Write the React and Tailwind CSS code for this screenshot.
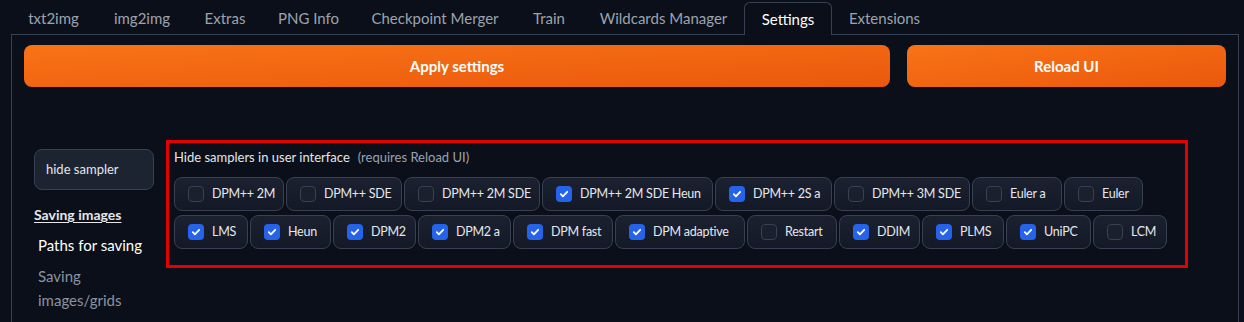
import React, { useState } from 'react';

const tabs = [
  { label: 'txt2img', w: 'w-[85px]' },
  { label: 'img2img', w: 'w-[92px]' },
  { label: 'Extras', w: 'w-[74px]' },
  { label: 'PNG Info', w: 'w-[93px]' },
  { label: 'Checkpoint Merger', w: 'w-[160px]' },
  { label: 'Train', w: 'w-[68px]' },
  { label: 'Wildcards Manager', w: 'w-[161px]' },
  { label: 'Settings', w: 'w-[88px]' },
  { label: 'Extensions', w: 'w-[105px]' },
];

const samplers = [
  { name: 'DPM++ 2M', w: 'w-[110px]', on: false },
  { name: 'DPM++ SDE', w: 'w-[116px]', on: false },
  { name: 'DPM++ 2M SDE', w: 'w-[136px]', on: false },
  { name: 'DPM++ 2M SDE Heun', w: 'w-[171px]', on: true },
  { name: 'DPM++ 2S a', w: 'w-[117px]', on: true },
  { name: 'DPM++ 3M SDE', w: 'w-[136px]', on: false },
  { name: 'Euler a', w: 'w-[90px]', on: false },
  { name: 'Euler', w: 'w-[79px]', on: false },
  { name: 'LMS', w: 'w-[74px]', on: true },
  { name: 'Heun', w: 'w-[81px]', on: true },
  { name: 'DPM2', w: 'w-[83px]', on: true },
  { name: 'DPM2 a', w: 'w-[93px]', on: true },
  { name: 'DPM fast', w: 'w-[100px]', on: true },
  { name: 'DPM adaptive', w: 'w-[130px]', on: true },
  { name: 'Restart', w: 'w-[90px]', on: false },
  { name: 'DDIM', w: 'w-[81px]', on: true },
  { name: 'PLMS', w: 'w-[82px]', on: true },
  { name: 'UniPC', w: 'w-[85px]', on: true },
  { name: 'LCM', w: 'w-[74px]', on: false },
];

const SamplerChip = ({ name, w, checked, onToggle }) => (
  <label
    className={`${w} h-[34px] flex items-center pl-[13px] gap-[8px] rounded-lg border border-[#374151] bg-linear-to-b from-[#1b2130] to-[#131926] cursor-pointer overflow-hidden`}
  >
    <span
      onClick={onToggle}
      className={`w-4 h-4 shrink-0 rounded flex items-center justify-center ${
        checked ? 'bg-[#2563eb]' : 'bg-[#1a202d] border border-[#374151]'
      }`}
    >
      {checked && (
        <svg viewBox="0 0 16 16" className="w-4 h-4" fill="none">
          <path d="M4.8 8.2l2.1 2.1 4.3-4.5" stroke="white" strokeWidth="1.8" strokeLinecap="round" strokeLinejoin="round" />
        </svg>
      )}
    </span>
    <span className="text-[12.5px] tracking-[-0.25px] text-[#e5e7eb] whitespace-nowrap">{name}</span>
  </label>
);

const App = () => {
  const [checked, setChecked] = useState(samplers.map((s) => s.on));

  const toggle = (i) => setChecked((prev) => prev.map((v, j) => (j === i ? !v : v)));

  return (
    <div className="min-h-[322px] bg-[#0b0f19] pt-[2px] font-['Lato',sans-serif] overflow-hidden">
      {/* Tabs */}
      <div className="relative z-10 flex h-[33px] pl-[11px]">
        {tabs.map((t) =>
          t.label === 'Settings' ? (
            <button
              key={t.label}
              className={`${t.w} h-[33px] text-[15px] text-white bg-[#0b0f19] border border-b-0 border-[#374151] rounded-t-md`}
            >
              {t.label}
            </button>
          ) : (
            <button key={t.label} className={`${t.w} h-[33px] text-[15px] text-[#9ca3af]`}>
              {t.label}
            </button>
          )
        )}
      </div>

      {/* Panel */}
      <div className="ml-[11px] mr-[5px] -mt-px border-l border-t border-r border-[#374151] px-3 pt-[10px] h-[300px]">
        <div className="flex gap-[17px]">
          <button className="flex-1 h-[42px] rounded-lg bg-linear-to-br from-[#f97316] to-[#ea580c] text-white text-[15px] font-bold">
            Apply settings
          </button>
          <button className="w-[319px] h-[42px] rounded-lg bg-linear-to-br from-[#f97316] to-[#ea580c] text-white text-[15px] font-bold">
            Reload UI
          </button>
        </div>

        <div className="flex mt-[53px]">
          {/* Sidebar */}
          <div className="w-[130px] pl-[10px] shrink-0">
            <div className="mt-[9px] h-[41px] rounded-lg border border-[#374151] bg-[#1c2331] flex items-center pl-[11px] text-[13px] text-[#e5e7eb]">
              hide sampler
            </div>
            <div className="mt-[15px] text-[14px] leading-5 font-bold text-[#e5e7eb] underline underline-offset-2">
              Saving images
            </div>
            <div className="mt-2 pl-1 text-[15px] leading-6 text-white">Paths for saving</div>
            <div className="mt-[7px] pl-1 text-[15px] leading-6 text-[#8b93a1]">
              Saving
              <br />
              images/grids
            </div>
          </div>

          {/* Highlighted setting */}
          <div className="ml-[12px] w-[1022px] h-[128px] border-[3px] border-[#e30000] px-[5px] pt-[5px] pb-4">
            <div className="h-5 flex items-center text-[13px] text-[#e5e7eb] mb-[9px]">
              Hide samplers in user interface
              <span className="ml-[8px] text-[#9ca3af]">(requires Reload UI)</span>
            </div>
            <div className="flex flex-wrap gap-x-[2px] gap-y-1">
              {samplers.map((s, i) => (
                <SamplerChip key={s.name} name={s.name} w={s.w} checked={checked[i]} onToggle={() => toggle(i)} />
              ))}
            </div>
          </div>
        </div>
      </div>
    </div>
  );
};

export default App;
